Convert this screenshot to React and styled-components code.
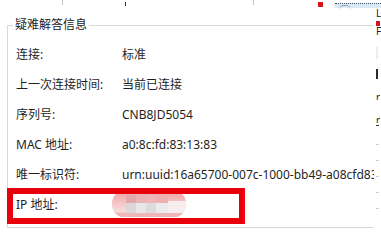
import React from "react";
import styled, { createGlobalStyle } from "styled-components";

const GlobalStyle = createGlobalStyle`
  html, body {
    margin: 0;
    padding: 0;
    background: #ffffff;
  }
  body {
    font-family: "Microsoft YaHei", "Noto Sans", "Noto Sans CJK SC", sans-serif;
    font-size: 12px;
    color: #1f1f1f;
  }
`;

const Page = styled.div`
  width: 381px;
  height: 234px;
  overflow: hidden;
  display: flex;
  flex-direction: column;
  background: #fff;
`;

const TopBar = styled.div`
  height: 8px;
  display: flex;
  align-items: flex-start;
  flex-shrink: 0;
`;

const Tick = styled.span`
  margin-left: ${(p) => p.$gap}px;
  margin-top: ${(p) => p.$top || 0}px;
  width: ${(p) => p.$w || 1}px;
  height: ${(p) => p.$h || 5}px;
  background: ${(p) => p.$color || "#c4c4c4"};
  flex-shrink: 0;
`;

const Selection = styled.span`
  margin-left: 12px;
  margin-top: 3px;
  flex: 1;
  height: 4px;
  background: #dbeaf7;
  border-top: 1px dotted #40506a;
  display: flex;
  padding-left: 4px;
`;

const Arc = styled.span`
  width: 12px;
  height: 4px;
  border-top: 1px solid #9a9a9a;
  border-radius: 6px 6px 0 0;
  margin-top: 1px;
`;

const Body = styled.div`
  flex: 1;
  display: flex;
  min-height: 0;
`;

const Main = styled.div`
  width: 374px;
  flex-shrink: 0;
  overflow: hidden;
  padding-top: 9px;
`;

const Group = styled.fieldset`
  margin: 0 0 0 7px;
  padding: 0 0 8px 8px;
  width: 440px;
  border: 1px solid #d9d9d9;
  box-sizing: border-box;
`;

const Legend = styled.legend`
  margin-left: -3px;
  padding: 0 2px;
  line-height: 16px;
  font-size: 12px;
  color: #1a1a1a;
`;

const Rows = styled.div`
  margin-top: 6px;
  display: flex;
  flex-direction: column;
`;

const Row = styled.div`
  height: 30px;
  display: flex;
  align-items: center;
  white-space: nowrap;
  position: relative;
`;

const Label = styled.span`
  width: 106px;
  flex-shrink: 0;
`;

const Value = styled.span`
  display: flex;
  align-items: center;
`;

const Highlight = styled.div`
  position: absolute;
  left: -9px;
  top: -1px;
  width: 238px;
  height: 36px;
  border: 6px solid #e8000b;
  box-sizing: border-box;
  pointer-events: none;
`;

const Side = styled.div`
  flex: 1;
  overflow: hidden;
  display: flex;
  flex-direction: column;
  align-items: flex-start;
  padding-left: 2px;
  color: #222;
`;

const Frag = styled.span`
  margin-top: ${(p) => p.$top}px;
  width: ${(p) => p.$w || 3}px;
  height: ${(p) => p.$h || 5}px;
  background: ${(p) => p.$color || "transparent"};
  font-size: 10px;
  line-height: ${(p) => p.$h || 5}px;
  overflow: hidden;
  flex-shrink: 0;
`;

const Blur = () => (
  <svg width="74" height="26" viewBox="0 0 74 26" style={{ marginLeft: -10 }}>
    <defs>
      <clipPath id="cap">
        <rect x="0" y="0" width="74" height="26" rx="12" />
      </clipPath>
      <linearGradient id="pk" x1="0" y1="0" x2="0" y2="1">
        <stop offset="0" stopColor="#f0a2a5" />
        <stop offset="0.45" stopColor="#f4c4c5" />
        <stop offset="0.75" stopColor="#f7dada" />
        <stop offset="1" stopColor="#f3b3b4" />
      </linearGradient>
    </defs>
    <g clipPath="url(#cap)">
      <rect width="74" height="26" fill="url(#pk)" />
      <rect x="14" y="4" width="10" height="8" fill="#e3a6aa" />
      <rect x="24" y="4" width="10" height="8" fill="#e9b2b4" />
      <rect x="34" y="4" width="10" height="8" fill="#ecb6b8" />
      <rect x="44" y="4" width="12" height="8" fill="#f0b0b2" />
      <rect x="14" y="12" width="10" height="10" fill="#dcd6d7" />
      <rect x="24" y="12" width="10" height="10" fill="#e9e6e6" />
      <rect x="34" y="12" width="10" height="10" fill="#dedbdb" />
      <rect x="44" y="12" width="12" height="10" fill="#ecebeb" />
      <rect x="56" y="10" width="18" height="12" fill="#f6eeee" />
      <rect x="0" y="22" width="74" height="4" fill="#f1b6b7" />
    </g>
  </svg>
);

const rows = [
  ["连接:", "标准"],
  ["上一次连接时间:", "当前已连接"],
  ["序列号:", "CNB8JD5054"],
  ["MAC 地址:", "a0:8c:fd:83:13:83"],
  ["唯一标识符:", "urn:uuid:16a65700-007c-1000-bb49-a08cfd83a0"],
];

export default function App() {
  return (
    <Page>
      <GlobalStyle />
      <TopBar>
        <Tick $gap={62} $h={5} />
        <Tick $gap={62} $top={2} $h={4} $color="#333" />
        <Tick $gap={127} $h={5} />
        <Tick $gap={64} $top={2} $w={5} $h={5} $color="#d9141b" />
        <Selection>
          <Arc />
        </Selection>
      </TopBar>
      <Body>
        <Main>
          <Group>
            <Legend>疑难解答信息</Legend>
            <Rows>
              {rows.map(([k, v]) => (
                <Row key={k}>
                  <Label>{k}</Label>
                  <Value>{v}</Value>
                </Row>
              ))}
              <Row>
                <Label>IP 地址:</Label>
                <Value>
                  <Blur />
                </Value>
                <Highlight />
              </Row>
            </Rows>
          </Group>
        </Main>
        <Side>
          <Frag $top={1} $w={6} $h={8}>L</Frag>
          <Frag $top={4} $w={4} $h={5} $color="#d4141c" />
          <Frag $top={1} $w={6} $h={8}>F</Frag>
          <Frag $top={12} $w={2} $h={12} $color="#e6eef6" />
          <Frag $top={10} $w={2} $h={10} $color="#2a2a2a" />
          <Frag $top={15} $w={4} $h={6}>r</Frag>
          <Frag $top={17} $w={4} $h={6}>r</Frag>
          <Frag $top={2} $w={3} $h={1} $color="#333" />
          <Frag $top={18} $w={3} $h={1} $color="#cfcfcf" />
          <Frag $top={15} $w={3} $h={1} $color="#cfcfcf" />
          <Frag $top={15} $w={3} $h={1} $color="#cfcfcf" />
          <Frag $top={15} $w={3} $h={1} $color="#cfcfcf" />
          <Frag $top={15} $w={3} $h={1} $color="#cfcfcf" />
        </Side>
      </Body>
    </Page>
  );
}
